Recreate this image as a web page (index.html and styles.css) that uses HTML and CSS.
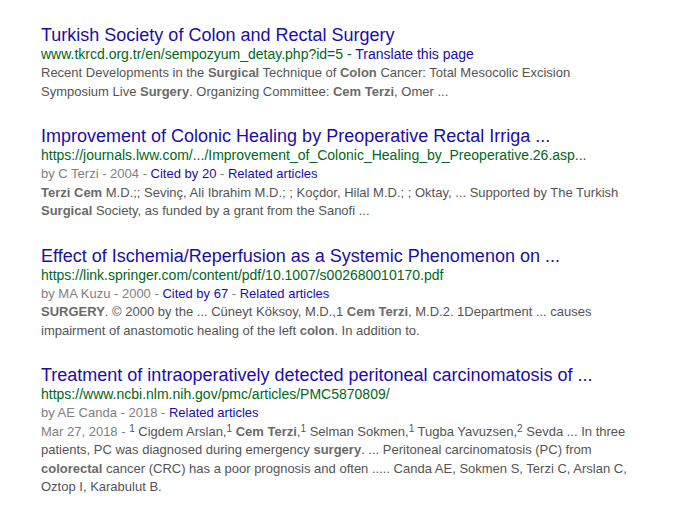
FILE: index.html
```html
<!DOCTYPE html>
<html>
<head>
<meta charset="utf-8">
<link rel="stylesheet" href="styles.css">
</head>
<body>
<div class="results">
  <div class="result">
    <a class="title" href="#">Turkish Society of Colon and Rectal Surgery</a>
    <div class="url">www.tkrcd.org.tr/en/sempozyum_detay.php?id=5 - <a class="link" href="#">Translate this page</a></div>
    <div class="snippet">Recent Developments in the <b>Surgical</b> Technique of <b>Colon</b> Cancer: Total Mesocolic Excision Symposium Live <b>Surgery</b>. Organizing Committee: <b>Cem Terzi</b>, Omer ...</div>
  </div>
  <div class="result">
    <a class="title" href="#">Improvement of Colonic Healing by Preoperative Rectal Irriga ...</a>
    <div class="url">https://journals.lww.com/.../Improvement_of_Colonic_Healing_by_Preoperative.26.asp...</div>
    <div class="byline">by C Terzi - 2004 - <a class="link" href="#">Cited by 20</a> - <a class="link" href="#">Related articles</a></div>
    <div class="snippet"><b>Terzi Cem</b> M.D.;; Sevinç, Ali Ibrahim M.D.; ; Koçdor, Hilal M.D.; ; Oktay, ... Supported by The Turkish <b>Surgical</b> Society, as funded by a grant from the Sanofi ...</div>
  </div>
  <div class="result">
    <a class="title" href="#">Effect of Ischemia/Reperfusion as a Systemic Phenomenon on ...</a>
    <div class="url">https://link.springer.com/content/pdf/10.1007/s002680010170.pdf</div>
    <div class="byline">by MA Kuzu - 2000 - <a class="link" href="#">Cited by 67</a> - <a class="link" href="#">Related articles</a></div>
    <div class="snippet"><b>SURGERY</b>. © 2000 by the ... Cüneyt Köksoy, M.D.,1 <b>Cem Terzi</b>, M.D.2. 1Department ... causes impairment of anastomotic healing of the left <b>colon</b>. In addition to.</div>
  </div>
  <div class="result">
    <a class="title" href="#">Treatment of intraoperatively detected peritoneal carcinomatosis of ...</a>
    <div class="url">https://www.ncbi.nlm.nih.gov/pmc/articles/PMC5870809/</div>
    <div class="byline">by AE Canda - 2018 - <a class="link" href="#">Related articles</a></div>
    <div class="snippet"><span class="date">Mar 27, 2018 - </span><sup>1</sup> Cigdem Arslan,<sup>1</sup> <b>Cem Terzi</b>,<sup>1</sup> Selman Sokmen,<sup>1</sup> Tugba Yavuzsen,<sup>2</sup> Sevda ... In three patients, PC was diagnosed during emergency <b>surgery</b>. ... Peritoneal carcinomatosis (PC) from <b>colorectal</b> cancer (CRC) has a poor prognosis and often ..... Canda AE, Sokmen S, Terzi C, Arslan C, Oztop I, Karabulut B.</div>
  </div>
</div>
</body>
</html>
```

FILE: styles.css
```css
html, body {
  margin: 0;
  padding: 0;
  background: #ffffff;
}
body {
  font-family: "Liberation Sans", Arial, sans-serif;
}
.results {
  padding: 25px 0 0 41px;
  width: 594px;
  display: flex;
  flex-direction: column;
  gap: 25px;
}
.result {
  display: flex;
  flex-direction: column;
}
.title {
  font-size: 18px;
  line-height: 21px;
  color: #1a0dab;
  text-decoration: none;
  white-space: nowrap;
}
.url {
  font-size: 14px;
  line-height: 16px;
  color: #006621;
  margin-bottom: 2px;
  white-space: nowrap;
}
.link {
  color: #1a0dab;
  text-decoration: none;
}
.byline {
  font-size: 13px;
  line-height: 18.5px;
  color: #808080;
}
.snippet {
  font-size: 13px;
  line-height: 18.5px;
  color: #545454;
}
.snippet b {
  color: #6a6a6a;
  font-weight: bold;
}
.date {
  color: #808080;
}
sup {
  font-size: 10px;
  line-height: 0;
  vertical-align: 4px;
}
```
